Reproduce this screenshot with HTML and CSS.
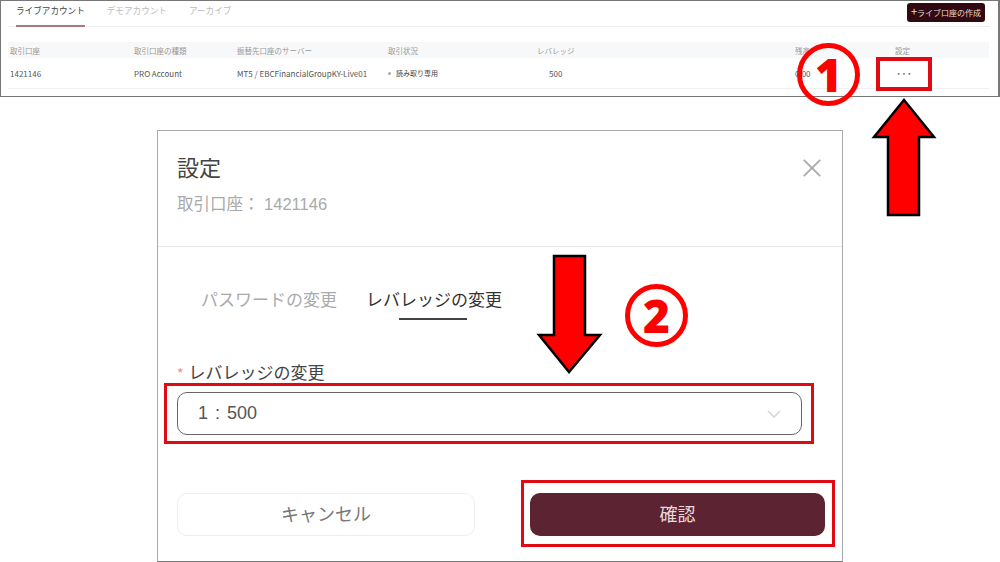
FILE: index.html
```html
<!DOCTYPE html>
<html lang="ja">
<head>
<meta charset="utf-8">
<title>設定</title>
<link rel="stylesheet" href="styles.css">
</head>
<body>
<section class="panel">
  <div class="tabbar">
    <nav class="tabs">
      <span class="tab active">ライブアカウント</span>
      <span class="tab">デモアカウント</span>
      <span class="tab">アーカイブ</span>
    </nav>
    <button class="create"><span class="plus">+</span>ライブ口座の作成</button>
  </div>
  <div class="grid head">
    <span>取引口座</span><span>取引口座の種類</span><span>振替先口座のサーバー</span><span>取引状況</span><span>レバレッジ</span><span>残高</span><span>設定</span>
  </div>
  <div class="grid row">
    <span>1421146</span><span>PRO Account</span><span>MT5 / EBCFinancialGroupKY-Live01</span><span class="status"><i class="dot"></i>読み取り専用</span><span class="lev">500</span><span>0.00</span><span class="more">···</span>
  </div>
</section>

<section class="modal">
  <header class="modal-head">
    <div>
      <h1>設定</h1>
      <p>取引口座： 1421146</p>
    </div>
    <svg class="close" width="22" height="22" viewBox="0 0 22 22"><path d="M2 2 L20 20 M20 2 L2 20" stroke="#aaa" stroke-width="2" fill="none"/></svg>
  </header>
  <div class="modal-body">
    <div class="mtabs">
      <span class="mtab">パスワードの変更</span>
      <span class="mtab on">レバレッジの変更</span>
    </div>
    <label class="field"><span class="req">*</span>レバレッジの変更</label>
    <div class="select">
      <span>1 : 500</span>
      <svg width="14" height="8" viewBox="0 0 14 8"><path d="M1 1 L7 7 L13 1" stroke="#d4d4d4" stroke-width="1.5" fill="none"/></svg>
    </div>
    <div class="actions">
      <button class="cancel">キャンセル</button>
      <button class="confirm">確認</button>
    </div>
  </div>
</section>

<div class="mark box-more"></div>
<div class="mark box-select"></div>
<div class="mark box-confirm"></div>
<div class="num num-1">1</div>
<div class="num num-2">2</div>
<svg class="arrow arrow-up" width="70" height="124" viewBox="0 0 70 124"><polygon points="35,3 65,40 50,40 50,118 19,118 19,40 5,40" fill="#f00" stroke="#000" stroke-width="2.5" stroke-linejoin="miter"/></svg>
<svg class="arrow arrow-down" width="70" height="124" viewBox="0 0 70 124"><polygon points="34,119 4,82 19,82 19,3 50,3 50,82 65,82" fill="#f00" stroke="#000" stroke-width="2.5" stroke-linejoin="miter"/></svg>
</body>
</html>
```
FILE: styles.css
```css
* { box-sizing: border-box; }
html, body { margin: 0; padding: 0; }
body {
  width: 1000px;
  height: 562px;
  overflow: hidden;
  background: #fff;
  position: relative;
  font-family: "Noto Sans CJK JP", "Noto Sans", sans-serif;
  color: #333;
}
button { font-family: inherit; }

.panel {
  width: 1000px;
  height: 97px;
  border: 1px solid #777;
  border-right-width: 2px;
  padding-left: 7px;
}
.tabbar {
  display: flex;
  justify-content: space-between;
  width: 982px;
  height: 26px;
  padding: 0 0 0 8px;
  border-bottom: 1px solid #eee;
}
.tabs { display: flex; gap: 22px; }
.tab {
  font-size: 8.6px;
  line-height: 14px;
  color: #bbb;
  height: 26px;
  padding-top: 2px;
}
.tab.active {
  color: #444;
  border-bottom: 2px solid #a8787c;
}
.create {
  width: 78px;
  height: 19px;
  margin: 2px 5px 0 0;
  padding: 0;
  border: 0;
  border-radius: 3px;
  background: #300a10;
  color: #e8dcdc;
  font-size: 8px;
  line-height: 19px;
  white-space: nowrap;
}
.plus { font-size: 11px; line-height: 10px; }
.grid {
  display: grid;
  grid-template-columns: 124px 103px 151px 149px 258px 100px 90px;
  width: 981px;
  padding-left: 2px;
  font-size: 7.5px;
  align-items: center;
}
.head {
  height: 16px;
  margin-top: 15px;
  background: #f7f8fa;
  color: #999;
}
.row {
  height: 31px;
  border-bottom: 1px solid #f0f0f0;
  color: #555;
  font-size: 8px;
}
.status { display: flex; align-items: center; font-size: 7px; color: #444; }
.dot {
  width: 3px;
  height: 3px;
  border-radius: 50%;
  background: #aaa;
  margin-right: 5px;
}
.lev { padding-left: 12px; }
.more { font-size: 9px; font-weight: 700; padding-left: 1px; color: #666; letter-spacing: 0; }

.modal {
  width: 686px;
  height: 432px;
  margin: 33px 0 0 157px;
  border: 1px solid #aaa;
  border-bottom-color: #777;
  background: #fff;
}
.modal-head {
  height: 116px;
  padding: 19px 20px 0 19px;
  border-bottom: 1px solid #e8e8e8;
  display: flex;
  justify-content: space-between;
  align-items: flex-start;
}
.modal-head h1 {
  margin: 0;
  font-size: 22px;
  line-height: 32px;
  font-weight: 400;
  color: #444;
}
.modal-head p {
  margin: 10px 0 0;
  font-size: 16.5px;
  line-height: 24px;
  color: #aaa;
  font-family: "Liberation Sans", "Noto Sans CJK JP", sans-serif;
}
.close { margin: 8px 0 0 0; width: 20px; height: 20px; }
.modal-body { padding: 0 19px; }
.mtabs {
  display: flex;
  gap: 29px;
  padding: 39px 0 0 24px;
  height: 72px;
}
.mtab {
  font-size: 17px;
  line-height: 26px;
  color: #aaa;
  white-space: nowrap;
  position: relative;
}
.mtab.on { color: #333; }
.mtab.on::after {
  content: "";
  position: absolute;
  left: 33px;
  top: 32px;
  width: 68px;
  height: 2px;
  background: #444;
}
.field {
  display: block;
  margin-top: 41px;
  font-size: 17px;
  line-height: 24px;
  color: #444;
  white-space: nowrap;
}
.req { color: #e88; font-size: 14px; margin-right: 5px; }
.select {
  width: 625px;
  height: 43px;
  margin-top: 7px;
  padding: 0 20px 0 20px;
  border: 1px solid #666;
  border-radius: 10px;
  display: flex;
  align-items: center;
  justify-content: space-between;
  font-size: 18px;
  word-spacing: 2px;
  color: #555;
  font-family: "Liberation Sans", sans-serif;
}
.actions {
  display: flex;
  gap: 55px;
  margin-top: 58px;
}
.actions button {
  flex: none;
  height: 43px;
  font-size: 18px;
  padding: 0 0 3px;
  border-radius: 10px;
}
.cancel {
  width: 298px;
  background: #fff;
  border: 1px solid #eee;
  color: #777;
}
.confirm {
  width: 295px;
  background: #5c2332;
  border: 0;
  color: #e6dada;
}

.mark {
  position: absolute;
  border: 3px solid #e00b12;
}
.box-more { left: 876px; top: 57px; width: 56px; height: 34px; border-width: 4px; }
.box-select { left: 164px; top: 383px; width: 650px; height: 61px; }
.box-confirm { left: 521px; top: 480px; width: 314px; height: 67px; }
.num {
  position: absolute;
  width: 63px;
  height: 63px;
  border: 5px solid #f00;
  border-radius: 50%;
  color: #f00;
  font: 900 46px/52px "Noto Sans", sans-serif;
  text-align: center;
  background: transparent;
}
.num-1 { left: 797px; top: 43px; }
.num-2 { left: 625px; top: 284px; }
.arrow { position: absolute; }
.arrow-up { left: 869px; top: 97px; }
.arrow-down { left: 535px; top: 253px; }
```
